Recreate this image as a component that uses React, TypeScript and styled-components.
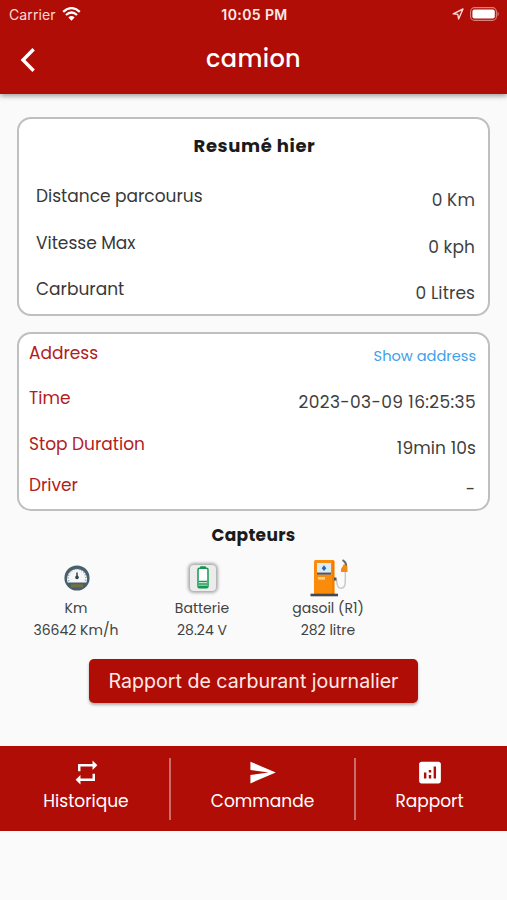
import React from "react";
import styled, { createGlobalStyle } from "styled-components";
import { MdAnalytics, MdRepeat, MdSend } from "react-icons/md";

const RED = "#b00d06";

const GlobalStyle = createGlobalStyle`
  * { box-sizing: border-box; }
  body {
    margin: 0;
    background: #fafafa;
    font-family: Poppins, Inter, "Open Sans", sans-serif;
    color: #333;
  }
`;

const Screen = styled.div`
  width: 507px;
  height: 900px;
  display: flex;
  flex-direction: column;
  background: #fafafa;
  overflow: hidden;
`;

const Header = styled.header`
  flex: none;
  height: 94px;
  background: ${RED};
  color: #fff;
  box-shadow: 0 2px 5px rgba(0, 0, 0, 0.38);
`;

const StatusBar = styled.div`
  height: 28px;
  display: grid;
  grid-template-columns: 1fr auto 1fr;
  align-items: center;
  padding: 0 7px 0 9px;
  font-family: Inter, sans-serif;
  font-size: 14px;
`;

const Carrier = styled.div`
  display: flex;
  align-items: center;
  gap: 6px;
  letter-spacing: 0.1px;
  color: #ffd9d5;
`;

const Clock = styled.div`
  font-weight: 600;
  font-size: 14px;
  letter-spacing: 0.4px;
  color: #ffebe8;
`;

const Indicators = styled.div`
  display: flex;
  align-items: center;
  justify-content: flex-end;
  gap: 6px;
`;

const TitleBar = styled.div`
  height: 64px;
  display: grid;
  grid-template-columns: 60px 1fr 60px;
  align-items: center;
`;

const BackButton = styled.button`
  display: flex;
  padding: 0 0 0 20px;
  border: 0;
  background: none;
`;

const Title = styled.h1`
  margin: 0 0 4px;
  text-align: center;
  font-size: 24px;
  font-weight: 500;
  letter-spacing: 0.35px;
`;

const Main = styled.main`
  flex: none;
  height: 652px;
  padding: 23px 17px 0;
  display: flex;
  flex-direction: column;
`;

const Card = styled.section<{ $height: number; $inset: string }>`
  flex: none;
  height: ${(p) => p.$height}px;
  padding: ${(p) => p.$inset};
  margin-bottom: 16px;
  background: #fff;
  border: 2px solid #bfbfbf;
  border-radius: 14px;
`;

const CardTitle = styled.h2`
  margin: 0 0 11px;
  height: 54px;
  line-height: 54px;
  text-align: center;
  font-size: 18px;
  font-weight: 700;
  color: #1b1b1b;
  letter-spacing: 0.6px;
  padding-right: 2px;
`;

const Row = styled.div<{ $height: number }>`
  height: ${(p) => p.$height}px;
  display: flex;
  justify-content: space-between;
  line-height: 24px;
`;

const Label = styled.span<{ $accent?: boolean }>`
  font-size: 17px;
  color: ${(p) => (p.$accent ? "#b3201c" : "#383838")};
`;

const Value = styled.span<{ $spacing?: number }>`
  padding-top: 4px;
  font-size: 17px;
  letter-spacing: ${(p) => p.$spacing ?? 0}px;
  color: #3f3f3f;
`;

const AddressLink = styled.a`
  padding-top: 3px;
  font-size: 14.6px;
  color: #3f9fe8;
`;

const SectionTitle = styled.h2`
  margin: -3px 0 0;
  height: 22px;
  line-height: 22px;
  text-align: center;
  font-size: 17px;
  font-weight: 700;
  letter-spacing: 0.3px;
  color: #1b1b1b;
`;

const Sensors = styled.div`
  display: flex;
  padding-top: 13px;
  margin-left: -4px;
`;

const Sensor = styled.div`
  width: 126px;
  display: flex;
  flex-direction: column;
  align-items: center;
  font-size: 14px;
  line-height: 22px;
  color: #424242;
  white-space: nowrap;
`;

const SensorIcon = styled.div`
  height: 38px;
  display: flex;
  align-items: center;
  padding-left: 1px;
`;

const FuelButton = styled.button`
  align-self: center;
  width: 329px;
  height: 44px;
  margin-top: 18px;
  padding: 0;
  border: 0;
  border-radius: 5px;
  background: ${RED};
  color: #ffe9e6;
  font-family: Inter, sans-serif;
  font-size: 19.6px;
  box-shadow: 0 2px 3px rgba(0, 0, 0, 0.3);
`;

const BottomBar = styled.nav`
  flex: none;
  height: 85px;
  display: flex;
  align-items: center;
  background: ${RED};
`;

const NavItem = styled.a<{ $width: number; $inset?: string }>`
  width: ${(p) => p.$width}px;
  height: 62px;
  display: flex;
  flex-direction: column;
  align-items: center;
  color: #fff;
  font-size: 17px;
  line-height: 28px;
  padding: ${(p) => p.$inset ?? "0"};

  svg {
    flex: none;
    height: 29px;
  }
`;

const Divider = styled.span`
  width: 2px;
  height: 62px;
  background: #cb6d69;
`;

const WifiIcon = () => (
  <svg width="19" height="14" viewBox="0 0 19 14">
    <path d="M1.2 4.9Q9.5 -2.7 17.8 4.9M4 8Q9.5 3 15 8" fill="none" stroke="#fff" strokeWidth="2.3" />
    <path d="M6.4 10.4Q9.5 7.6 12.6 10.4L9.5 13.7Z" fill="#fff" />
  </svg>
);

const LocationIcon = () => (
  <svg width="12" height="12" viewBox="0 0 12 12">
    <path d="M1.2 5.8L11 1L6.6 11L5.8 6.4Z" fill="none" stroke="#ffd5d0" strokeWidth="1.4" strokeLinejoin="round" />
  </svg>
);

const BatteryIcon = () => (
  <svg width="30" height="14" viewBox="0 0 30 14">
    <rect x="0.6" y="0.6" width="25.8" height="12.8" rx="4" fill="none" stroke="#d9827d" strokeWidth="1.1" />
    <rect x="2.4" y="2.4" width="22.4" height="9.2" rx="2" fill="#fff" />
    <path d="M27.5 4.5Q30 7 27.5 9.5Z" fill="#d9827d" />
  </svg>
);

const BackIcon = () => (
  <svg width="16" height="26" viewBox="0 0 16 26">
    <path d="M13.6 2.2L3 13L13.6 23.8" fill="none" stroke="#fff" strokeWidth="3.4" />
  </svg>
);

const GaugeIcon = () => (
  <svg width="26" height="26" viewBox="0 0 26 26">
    <circle cx="13" cy="13" r="11.6" fill="#48606d" stroke="#48606d" strokeWidth="2" />
    <path d="M3.6 17.5A10 10 0 1 1 22.4 17.5Z" fill="#f4f6f7" />
    <path d="M4.8 16A8.8 8.8 0 1 1 21.2 16" fill="none" stroke="#7b878e" strokeWidth="1.5" strokeDasharray="0.9 1.8" />
    <path d="M7 20.8H19" stroke="#77713d" strokeWidth="3" />
    <path d="M13 7.5V14" stroke="#33434c" strokeWidth="1.5" />
    <circle cx="13" cy="12.4" r="1.8" fill="#33434c" />
  </svg>
);

const BatterySensorIcon = () => (
  <svg width="36" height="36" viewBox="0 0 36 36">
    <defs>
      <filter id="glow" x="-20%" y="-20%" width="140%" height="140%">
        <feGaussianBlur stdDeviation="1.4" />
      </filter>
    </defs>
    <rect x="3" y="3" width="30" height="30" rx="6" fill="#aaa" filter="url(#glow)" />
    <rect x="5" y="5" width="26" height="26" rx="4" fill="#ececec" />
    <path d="M15.5 8V6.8H20.5V8" fill="#159653" stroke="#159653" />
    <rect x="13" y="8.3" width="10" height="19.4" rx="1.5" fill="#fff" stroke="#159653" strokeWidth="1.5" />
    <path d="M14 21.5H22M14 24H22M14 26.3H22" stroke="#159653" strokeWidth="1.6" />
  </svg>
);

const PumpIcon = () => (
  <svg width="38" height="38" viewBox="0 0 38 38">
    <path d="M24.5 20.5Q27 20 26.8 23.5Q27.5 29.5 31 29.3Q35.5 29 35.3 22V11" fill="none" stroke="#c9c9c9" strokeWidth="1.5" />
    <path d="M32.5 1.2Q36.8 3.5 36 8" fill="none" stroke="#5d6b75" strokeWidth="2" />
    <path d="M34 5L37.5 7.5V13H31V10Z" fill="#f58a13" />
    <rect x="4" y="1" width="20.5" height="34.5" rx="1.5" fill="#fb8b0b" />
    <path d="M23.2 2V35" stroke="#f17c00" strokeWidth="2" />
    <rect x="7" y="4" width="14" height="11.5" fill="#d8ecf7" />
    <path d="M7 14.6H21" stroke="#5a514d" strokeWidth="2" />
    <path d="M14 6.3L16.3 9.3L14 12L11.7 9.3Z" fill="#2e63a7" />
    <rect x="8" y="18" width="7" height="2.6" fill="#ffd28b" />
    <path d="M24 18.5H26.5V21.5H24Z" fill="#46545c" />
    <rect x="0.5" y="34.7" width="27.5" height="2.6" fill="#46484b" />
  </svg>
);

const summary = [
  { label: "Distance parcourus", value: "0 Km" },
  { label: "Vitesse Max", value: "0 kph" },
  { label: "Carburant", value: "0 Litres" },
];

const sensors = [
  { icon: <GaugeIcon />, name: "Km", value: "36642 Km/h" },
  { icon: <BatterySensorIcon />, name: "Batterie", value: "28.24 V" },
  { icon: <PumpIcon />, name: "gasoil (R1)", value: "282 litre" },
];

export default function App() {
  return (
    <>
      <GlobalStyle />
      <Screen>
        <Header>
          <StatusBar>
            <Carrier>Carrier <WifiIcon /></Carrier>
            <Clock>10:05 PM</Clock>
            <Indicators><LocationIcon /><BatteryIcon /></Indicators>
          </StatusBar>
          <TitleBar>
            <BackButton aria-label="Retour"><BackIcon /></BackButton>
            <Title>camion</Title>
          </TitleBar>
        </Header>
        <Main>
          <Card $height={199} $inset="0 13px 0 17px">
            <CardTitle>Resumé hier</CardTitle>
            {summary.map((r) => (
              <Row key={r.label} $height={46.5}>
                <Label>{r.label}</Label>
                <Value $spacing={0.1}>{r.value}</Value>
              </Row>
            ))}
          </Card>
          <Card $height={179} $inset="7px 12px 0 10px">
            <Row $height={45}>
              <Label $accent>Address</Label>
              <AddressLink>Show address</AddressLink>
            </Row>
            <Row $height={46}>
              <Label $accent>Time</Label>
              <Value $spacing={0.38}>2023-03-09 16:25:35</Value>
            </Row>
            <Row $height={41}>
              <Label $accent>Stop Duration</Label>
              <Value $spacing={0.1}>19min 10s</Value>
            </Row>
            <Row $height={38}>
              <Label $accent>Driver</Label>
              <Value $spacing={1}>-</Value>
            </Row>
          </Card>
          <SectionTitle>Capteurs</SectionTitle>
          <Sensors>
            {sensors.map((s) => (
              <Sensor key={s.name}>
                <SensorIcon>{s.icon}</SensorIcon>
                <span>{s.name}</span>
                <span>{s.value}</span>
              </Sensor>
            ))}
          </Sensors>
          <FuelButton>Rapport de carburant journalier</FuelButton>
        </Main>
        <BottomBar>
          <NavItem $width={169} $inset="0 0 0 3px"><MdRepeat size={29} />Historique</NavItem>
          <Divider />
          <NavItem $width={183}><MdSend size={29} />Commande</NavItem>
          <Divider />
          <NavItem $width={151} $inset="0 4px 0 0"><MdAnalytics size={30} />Rapport</NavItem>
        </BottomBar>
      </Screen>
    </>
  );
}
